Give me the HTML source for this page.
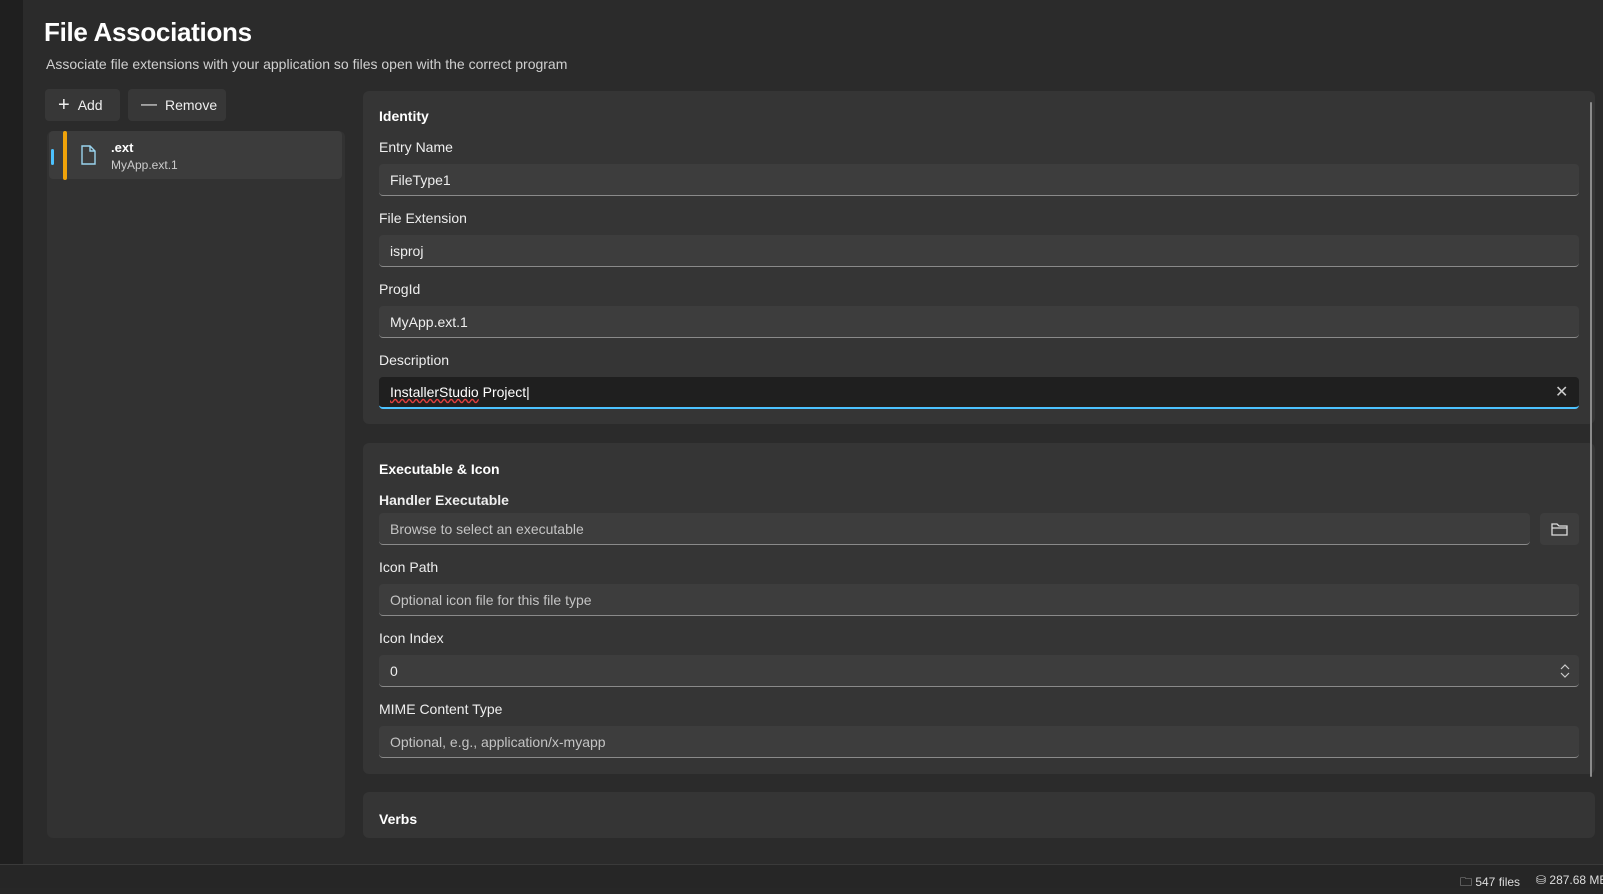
<!DOCTYPE html>
<html><head><meta charset="utf-8"><style>
*{box-sizing:border-box;margin:0;padding:0}
body{width:1603px;height:888px;background:#272727;font-family:"Liberation Sans",sans-serif;color:#fff;position:relative;overflow:hidden}
.a{position:absolute;white-space:nowrap}
.side{left:0;top:0;width:23px;height:864px;background:#1f1f1f}
.main{left:23px;top:0;width:1580px;height:864px;background:#2b2b2b}
h1{position:absolute;left:44px;top:17px;font-size:26px;font-weight:bold;letter-spacing:-0.3px}
.sub{left:46px;top:56px;font-size:14px;color:#d0d0d0}
.btn{background:#373737;border-radius:4px;height:32px;font-size:14px;display:flex;align-items:center;gap:8px;padding-left:13px;color:#eee}
.panel{background:#323232;border-radius:6px}
.card{background:#353535;border-radius:6px}
.lbl{font-size:14px;color:#eee}
.in{background:#3d3d3d;border-radius:4px;border-bottom:1px solid #8a8a8a;height:32px;font-size:14px;padding-left:11px;display:flex;align-items:center;color:#eee}
.ph{color:#c4c4c4}
.h{font-size:14px;font-weight:bold}
.status{left:0;top:864px;width:1603px;height:24px;background:#262626;border-top:1px solid #3a3a3a;font-size:12px;color:#ddd}
</style></head><body>
<div class="a side"></div>
<div class="a main"></div>
<h1>File Associations</h1>
<div class="a sub">Associate file extensions with your application so files open with the correct program</div>
<div class="a btn" style="left:45px;top:89px;width:75px"><span style="font-size:20px;font-weight:300">+</span>Add</div>
<div class="a btn" style="left:128px;top:89px;width:98px"><span style="font-size:16px">—</span>Remove</div>
<div class="a panel" style="left:47px;top:131px;width:298px;height:707px"></div>
<div class="a" style="left:49px;top:131px;width:293px;height:48px;background:#3c3c3c;border-radius:4px"></div>
<div class="a" style="left:51px;top:149px;width:3px;height:16px;background:#4cc2ff;border-radius:2px"></div>
<div class="a" style="left:63px;top:131px;width:4px;height:49px;background:#f0a30a;border-radius:2px"></div>
<svg class="a" style="left:80px;top:145px" width="17" height="21" viewBox="0 0 17 21"><path d="M2 1h8l5 5v13H2z M10 1v5h5" fill="none" stroke="#9ad4ee" stroke-width="1.4"/></svg>
<div class="a" style="left:111px;top:140px;font-size:13px;font-weight:bold">.ext</div>
<div class="a" style="left:111px;top:158px;font-size:12px;color:#ccc">MyApp.ext.1</div>
<div class="a card" style="left:363px;top:91px;width:1232px;height:333px"></div>
<div class="a h" style="left:379px;top:108px">Identity</div>
<div class="a lbl" style="left:379px;top:139px">Entry Name</div>
<div class="a in" style="left:379px;top:164px;width:1200px">FileType1</div>
<div class="a lbl" style="left:379px;top:210px">File Extension</div>
<div class="a in" style="left:379px;top:235px;width:1200px">isproj</div>
<div class="a lbl" style="left:379px;top:281px">ProgId</div>
<div class="a in" style="left:379px;top:306px;width:1200px">MyApp.ext.1</div>
<div class="a lbl" style="left:379px;top:352px">Description</div>
<div class="a in" style="left:379px;top:377px;width:1200px;background:#1f1f1f;border-bottom:2px solid #4cc2ff;color:#fff"><span style="text-decoration:underline wavy #e04040">InstallerStudio</span>&nbsp;Project|</div>
<div class="a" style="left:1555px;top:382px;font-size:16px;color:#ccc">✕</div>
<div class="a card" style="left:363px;top:443px;width:1232px;height:331px"></div>
<div class="a h" style="left:379px;top:461px">Executable &amp; Icon</div>
<div class="a lbl" style="left:379px;top:492px;font-weight:bold">Handler Executable</div>
<div class="a in" style="left:379px;top:513px;width:1151px"><span class="ph">Browse to select an executable</span></div>
<div class="a" style="left:1540px;top:513px;width:39px;height:32px;background:#3d3d3d;border-radius:4px"></div>
<svg class="a" style="left:1551px;top:522px" width="17" height="14" viewBox="0 0 17 14"><path d="M1 2h5l2 2h8v9H1z M1 6h15" fill="none" stroke="#ddd" stroke-width="1.3"/></svg>
<div class="a lbl" style="left:379px;top:559px">Icon Path</div>
<div class="a in" style="left:379px;top:584px;width:1200px"><span class="ph">Optional icon file for this file type</span></div>
<div class="a lbl" style="left:379px;top:630px">Icon Index</div>
<div class="a in" style="left:379px;top:655px;width:1200px">0</div>
<svg class="a" style="left:1560px;top:664px" width="10" height="14" viewBox="0 0 10 14"><path d="M1 5l4-4 4 4M1 9l4 4 4-4" fill="none" stroke="#ccc" stroke-width="1.2"/></svg>
<div class="a lbl" style="left:379px;top:701px">MIME Content Type</div>
<div class="a in" style="left:379px;top:726px;width:1200px"><span class="ph">Optional, e.g., application/x-myapp</span></div>
<div class="a card" style="left:363px;top:792px;width:1232px;height:46px"></div>
<div class="a h" style="left:379px;top:811px">Verbs</div>
<div class="a" style="left:1590px;top:102px;width:2px;height:675px;background:#8a8a8a;border-radius:1px"></div>
<div class="a status"></div>
<div class="a" style="left:1460px;top:873px;font-size:12px;color:#ddd">🗀 547 files</div>
<div class="a" style="left:1536px;top:873px;font-size:12px;color:#ddd">⛁ 287.68 MB</div>
</body></html>
